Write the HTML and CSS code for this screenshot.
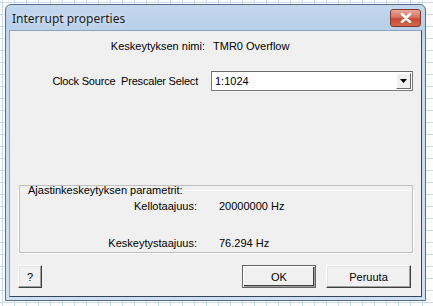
FILE: index.html
```html
<!DOCTYPE html>
<html>
<head>
<meta charset="utf-8">
<link rel="stylesheet" href="styles.css">
</head>
<body>
<div class="window">
  <div class="titlebar">
    <span class="title">Interrupt properties</span>
    <div class="close">
      <svg width="14" height="10" viewBox="0 0 14 10"><path d="M3 1 L11 9 M11 1 L3 9" stroke="#fff" stroke-width="2.6" stroke-linecap="round"/><path d="M3 1 L11 9 M11 1 L3 9" stroke="#fff" stroke-width="1.4"/></svg>
    </div>
  </div>
  <div class="client">
    <div class="row name-row">
      <span class="lbl lbl-name">Keskeytyksen nimi:</span>
      <span class="val">TMR0 Overflow</span>
    </div>
    <div class="row combo-row">
      <span class="lbl lbl-clock">Clock Source&nbsp; Prescaler Select</span>
      <div class="combo">
        <span class="combo-text">1:1024</span>
        <div class="combo-btn"><svg width="7" height="4" viewBox="0 0 7 4"><path d="M0 0 H7 L3.5 4 Z" fill="#000"/></svg></div>
      </div>
    </div>
    <fieldset class="group">
      <legend>Ajastinkeskeytyksen parametrit:</legend>
      <div class="grow first">
        <span class="glbl">Kellotaajuus:</span>
        <span class="gval">20000000 Hz</span>
      </div>
      <div class="grow second">
        <span class="glbl">Keskeytystaajuus:</span>
        <span class="gval">76.294 Hz</span>
      </div>
    </fieldset>
    <div class="buttons">
      <div class="btn help">?</div>
      <div class="spacer"></div>
      <div class="btn ok">OK</div>
      <div class="btn cancel">Peruuta</div>
    </div>
  </div>
</div>
</body>
</html>
```
FILE: styles.css
```css
html, body { margin: 0; padding: 0; }
body {
  width: 433px; height: 306px; overflow: hidden;
  background-color: #fdfdfe;
  background-image:
    linear-gradient(to right, #c9dced 1px, transparent 1px),
    linear-gradient(to bottom, #c9dced 1px, transparent 1px);
  background-size: 12px 12px;
  background-position: 2px 2px;
  font-family: "Liberation Sans", Arial, sans-serif;
  font-size: 11px;
  color: #000;
}
.window {
  position: relative;
  margin: 4px 0 0 5px;
  width: 421px; height: 297px;
  box-sizing: border-box;
  border: 1px solid #5a6f85;
  border-radius: 6px 6px 0 0;
  background: linear-gradient(to bottom, #c4d8ee 0px, #b9d0ea 20px, #c8dbef 40px, #cfe0f2 100%);
  padding: 0 3px 3px 3px;
  display: flex; flex-direction: column;
}
.titlebar {
  height: 25px;
  display: flex; align-items: center;
  padding-left: 3px;
  position: relative;
}
.title {
  font-family: "Noto Sans", "Open Sans", sans-serif;
  font-size: 12px;
  color: #1b1b1b;
  margin-top: 1px;
  text-shadow: 0 0 6px rgba(255,255,255,0.8);
}
.close {
  position: absolute; right: 1px; top: 4px;
  width: 31px; height: 18px;
  box-sizing: border-box;
  border: 1px solid #7e3a32;
  border-radius: 3px;
  background: linear-gradient(to bottom, #e9a99a 0%, #d8725f 45%, #c74a33 55%, #d5694d 100%);
  display: flex; align-items: center; justify-content: center;
}
.client {
  flex: 1;
  background: #f0f0f0;
  border: 1px solid #8aa2bb;
  border-right-color: #33485e;
  border-bottom-color: #33485e;
  position: relative;
}
.row { display: flex; align-items: center; }
.name-row { height: 14px; margin-top: 8px; }
.lbl-name { width: 195px; text-align: right; }
.name-row .val { margin-left: 8px; }
.combo-row { margin-top: 18px; height: 20px; }
.lbl-clock { width: 188px; text-align: right; letter-spacing: -0.2px; }
.combo {
  margin-left: 13px;
  width: 202px; height: 20px;
  box-sizing: border-box;
  background: #fff;
  border: 1px solid #7a7a7a;
  border-top-color: #6a6a6a;
  display: flex; align-items: center;
  position: relative;
}
.combo-text { padding-left: 3px; flex: 1; }
.combo-btn {
  width: 15px; height: 16px;
  margin-right: 1px;
  box-sizing: border-box;
  background: #f0f0f0;
  border: 1px solid;
  border-color: #fff #6a6a6a #6a6a6a #fff;
  display: flex; align-items: center; justify-content: center;
}
.group {
  margin: 93px 0 0 8px;
  width: 396px; height: 70px;
  box-sizing: border-box;
  border: 1px solid #fff;
  outline: 1px solid #c0c0c0;
  outline-offset: -2px;
  border-radius: 0;
  padding: 0;
}
.group legend {
  padding: 0 1px;
  margin-left: 8px;
  background: #f0f0f0;
  line-height: 13px;
}
.grow { display: flex; align-items: center; height: 14px; }
.grow.first { margin-top: 2px; }
.grow.second { margin-top: 23px; }
.glbl { width: 178px; text-align: right; }
.gval { margin-left: 22px; }
.buttons {
  display: flex;
  margin: 11px 10px 0 8px;
  gap: 10px;
}
.spacer { flex: 1; }
.btn {
  height: 23px;
  box-sizing: border-box;
  border: 1px solid;
  border-color: #ffffff #404040 #404040 #ffffff;
  box-shadow: inset -1px -1px 0 #a0a0a0, inset 1px 1px 0 #e3e3e3;
  background: #f0f0f0;
  display: flex; align-items: center; justify-content: center;
}
.help { width: 24px; }
.ok { width: 74px; border-color: #646464; box-shadow: inset 1px 1px 0 #fff, inset -1px -1px 0 #a0a0a0, inset -2px -2px 0 #404040; }
.cancel { width: 85px; }
```
